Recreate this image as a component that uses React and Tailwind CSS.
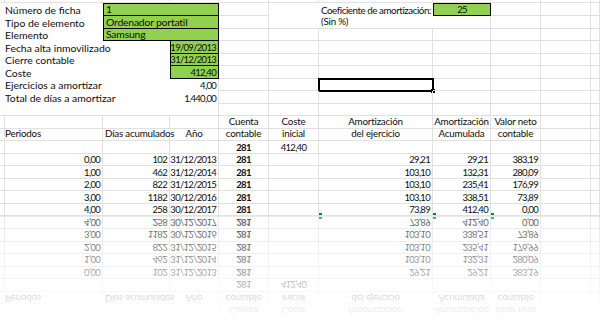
import React from "react";

const cols =
  "grid grid-cols-[3px_100px_67px_49px_50px_50px_114px_58px_50px_50px_9px]";

const alignCls = (align) =>
  align === "right" ? "justify-end" : align === "center" ? "justify-center" : "justify-start";

const numCls = "text-[9.5px] tracking-[-0.7px]";

const Cell = ({ span, r = true, b = true, align = "left", bold, num, className = "", children }) => (
  <div
    className={`relative flex items-end whitespace-nowrap leading-none px-[2px] pb-[1px] border-[#e1e1e1] ${
      span === 2 ? "col-span-2" : ""
    } ${r ? "border-r" : ""} ${b ? "border-b" : ""} ${alignCls(align)} ${bold ? "font-bold" : ""} ${
      num ? numCls : ""
    } ${className}`}
  >
    {children}
  </div>
);

const Green = ({ span, top, align = "left", num, children }) => (
  <div
    className={`flex items-end whitespace-nowrap leading-none px-[2px] pb-[1px] bg-[#92d050] border-black border-l border-r border-b ${
      top ? "border-t" : ""
    } ${span === 2 ? "col-span-2 text-[10.4px]" : ""} ${alignCls(align)} ${num ? numCls : ""}`}
  >
    {children}
  </div>
);

const Blanks = ({ n }) => Array.from({ length: n }).map((_, i) => <Cell key={i} />);

const Mark = () => <span className="absolute left-0 bottom-0 w-[3px] h-[2px] bg-[#1f7a3c]" />;

const top = [
  { label: "Número de ficha", green: "1", h: "h-[13px]" },
  { label: "Tipo de elemento", green: "Ordenador portatil", h: "h-[13px]" },
  { label: "Elemento", green: "Samsung", h: "h-[12px]" },
  { label: "Fecha alta inmovilizado", c: "19/09/2013", g: true, h: "h-[13px]" },
  { label: "Cierre contable", c: "31/12/2013", g: true, h: "h-[12px]" },
  { label: "Coste", c: "412,40", g: true, h: "h-[13px]" },
  { label: "Ejercicios a amortizar", c: "4,00", h: "h-[12px]" },
  { label: "Total de días a amortizar", c: "1.440,00", h: "h-[13px]" },
];

const data = [
  ["0,00", "102", "31/12/2013", "29,21", "29,21", "383,19", "h-[12px]"],
  ["1,00", "462", "31/12/2014", "103,10", "132,31", "280,09", "h-[13px]"],
  ["2,00", "822", "31/12/2015", "103,10", "235,41", "176,99", "h-[12px]"],
  ["3,00", "1182", "30/12/2016", "103,10", "338,51", "73,89", "h-[13px]"],
  ["4,00", "258", "30/12/2017", "73,89", "412,40", "0,00", "h-[12px]"],
];

const Row9 = () => (
  <div className={`${cols} h-[12px]`}>
    <Cell r={false} />
    <Cell r={false} />
    <Cell r={false} />
    <Cell />
    <Blanks n={7} />
  </div>
);

const Lower = () => (
  <div>
    <div className={`${cols} h-[13px]`}>
      <Cell />
      <Cell />
      <Cell />
      <Cell />
      <Cell align="center">Cuenta</Cell>
      <Cell align="center">Coste</Cell>
      <Cell align="center">Amortización</Cell>
      <Cell align="center">Amortización</Cell>
      <Cell align="center">Valor neto</Cell>
      <Blanks n={2} />
    </div>
    <div className={`${cols} h-[12px]`}>
      <Cell />
      <Cell>Periodos</Cell>
      <Cell>Días acumulados</Cell>
      <Cell align="center">Año</Cell>
      <Cell align="center">contable</Cell>
      <Cell align="center">inicial</Cell>
      <Cell align="center">del ejercicio</Cell>
      <Cell align="center">Acumulada</Cell>
      <Cell align="center">contable</Cell>
      <Blanks n={2} />
    </div>
    <div className={`${cols} h-[13px]`}>
      <Blanks n={4} />
      <Cell align="center" bold num>
        281
      </Cell>
      <Cell align="center" num>
        412,40
      </Cell>
      <Blanks n={5} />
    </div>
    {data.map((d, i) => (
      <div key={i} className={`${cols} ${d[6]}`}>
        <Cell />
        <Cell align="right" num>
          {d[0]}
        </Cell>
        <Cell align="right" num>
          {d[1]}
        </Cell>
        <Cell align="right" num>
          {d[2]}
        </Cell>
        <Cell align="center" bold num>
          281
        </Cell>
        <Cell />
        <Cell align="right" num>
          {i === 4 && <Mark />}
          {d[3]}
        </Cell>
        <Cell align="right" num>
          {i === 4 && <Mark />}
          {d[4]}
        </Cell>
        <Cell align="right" num>
          {i === 4 && <Mark />}
          {d[5]}
        </Cell>
        <Blanks n={2} />
      </div>
    ))}
  </div>
);

export default function App() {
  return (
    <div
      className="w-[600px] h-[326px] overflow-hidden bg-white text-[9.8px] tracking-[-0.2px] text-[#0d0d0d]"
      style={{ fontFamily: "Lato, 'Noto Sans', sans-serif" }}
    >
      <div className={`${cols} h-[3px]`}>
        <Blanks n={11} />
      </div>

      {top.map((row, i) => (
        <div key={i} className={`${cols} ${row.h}`}>
          <Cell r={false} b={false} />
          <Cell r={false} b={false} className="z-10 text-[10.4px] tracking-normal">
            {row.label}
          </Cell>
          {row.green ? (
            <Green span={2} top={i === 0} num={i === 0}>
              {row.green}
            </Green>
          ) : (
            <>
              <Cell r={false} b={false} />
              {row.g ? (
                <Green align="right" num>
                  {row.c}
                </Green>
              ) : (
                <Cell b={false} align="right" num>
                  {row.c}
                </Cell>
              )}
            </>
          )}
          <Cell />
          <Cell r={i > 1} b={i !== 0} />
          <Cell r={i > 1} b={i !== 0} className={i === 0 ? "tracking-[-0.45px]" : ""}>
            {i === 0 && "Coeficiente de amortización:"}
            {i === 1 && "(Sin %)"}
            {i === 6 && (
              <span className="absolute -left-px -top-px w-[116px] h-[14px] border-2 border-black">
                <span className="absolute -right-[3px] -bottom-[3px] w-[4px] h-[4px] bg-black" />
              </span>
            )}
          </Cell>
          {i === 0 ? (
            <Green top align="center" num>
              25
            </Green>
          ) : (
            <Cell />
          )}
          <Blanks n={3} />
        </div>
      ))}

      <Row9 />
      <Lower />

      <div className="relative h-[110px] overflow-hidden">
        <div className="-scale-y-100">
          <Row9 />
          <Lower />
        </div>
        <div className="absolute inset-0 bg-[linear-gradient(to_bottom,rgba(255,255,255,0.3),rgba(255,255,255,0.62)_50%,rgba(255,255,255,0.88)_78%,#fff)]" />
      </div>
    </div>
  );
}
